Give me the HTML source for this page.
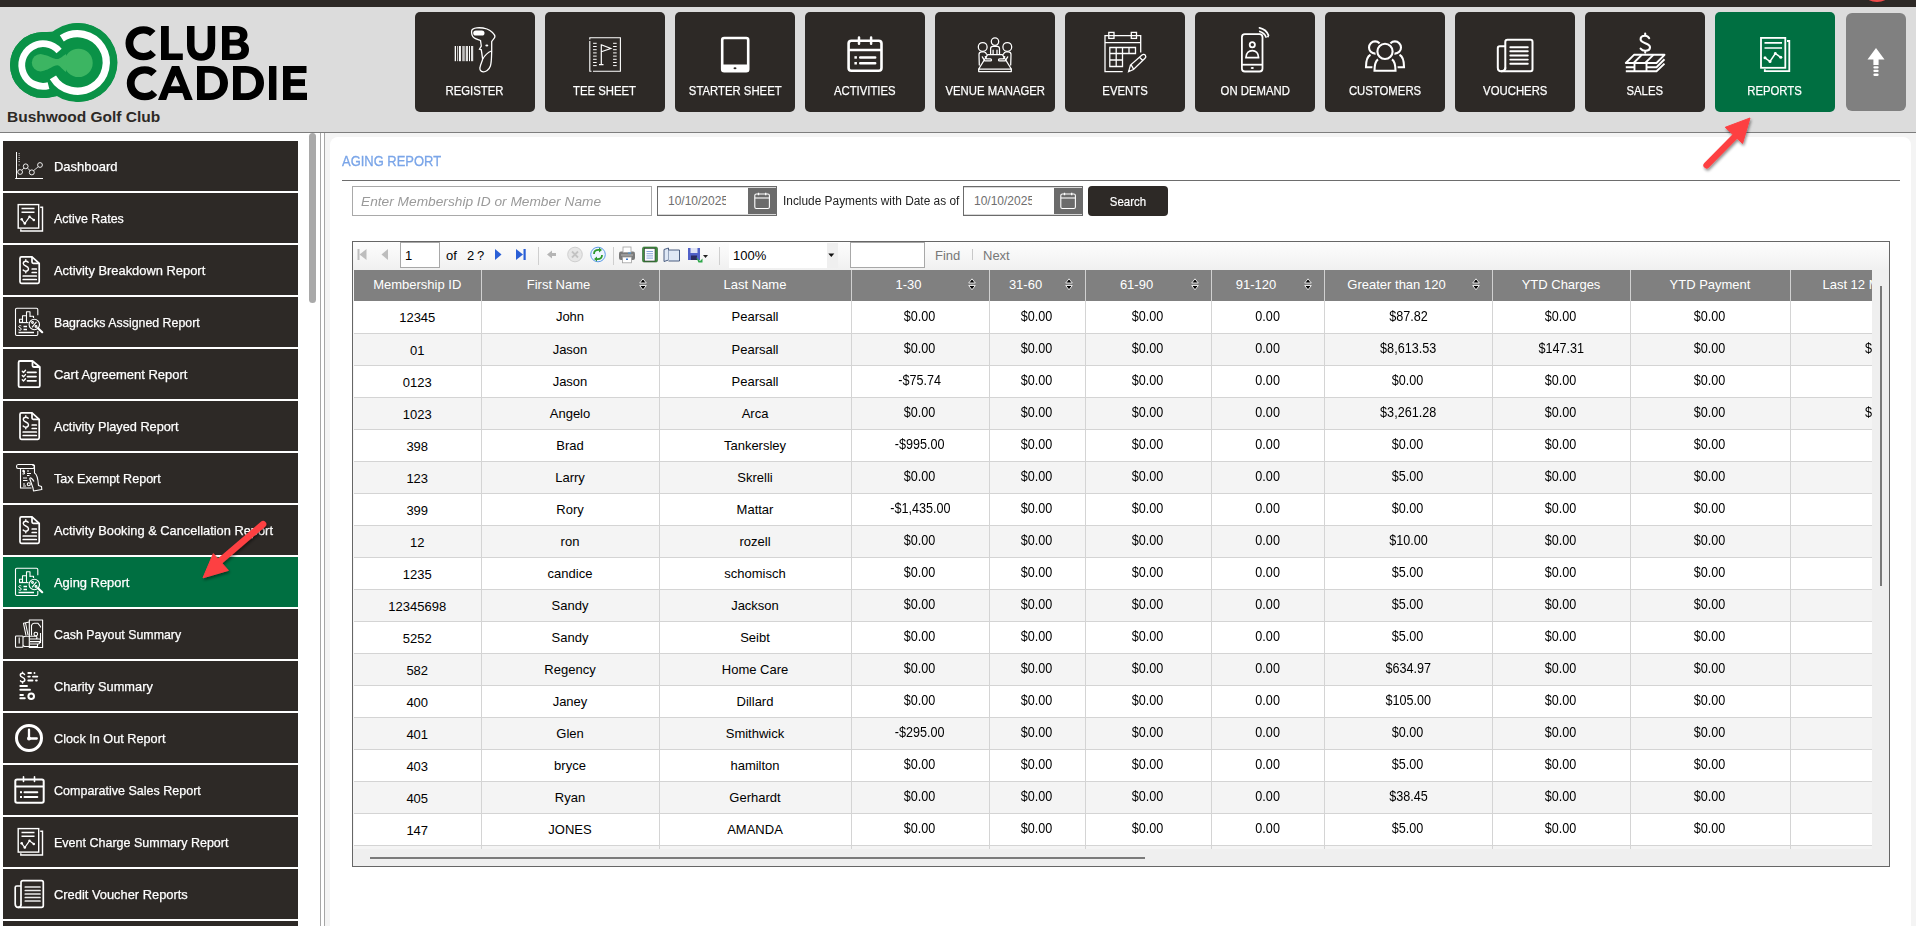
<!DOCTYPE html><html><head><meta charset="utf-8"><style>
*{margin:0;padding:0;box-sizing:border-box}
html,body{width:1916px;height:926px;overflow:hidden;background:#fff;font-family:"Liberation Sans",sans-serif}
.a{position:absolute}
.nb{position:absolute;top:12px;width:120px;height:100px;background:#2d2926;border-radius:5px;color:#fff}
.nb svg{position:absolute;left:30px;top:8px}
.nb span{position:absolute;left:0;width:120px;top:71px;text-align:center;font-size:13.5px;line-height:16px;white-space:nowrap;-webkit-text-stroke:0.25px #fff}
.nb span i{font-style:normal;display:inline-block;transform:scaleX(0.84);transform-origin:50% 50%}
.si{position:absolute;left:3px;width:295px;height:50px;background:#2d2926;color:#fff}
.si svg{position:absolute;left:5px;top:4px}
.si span{position:absolute;left:51px;top:18px;font-size:13px;line-height:16px;white-space:nowrap;-webkit-text-stroke:0.25px #fff}
table{border-collapse:collapse;table-layout:fixed}
#tb td{height:32px;border:1px solid #d4d4d4;border-top:none;text-align:center;font-size:13px;color:#000;white-space:nowrap;overflow:hidden;padding:2px 0 0 0;background:#fff}
#tb tr:nth-child(even) td{background:#f4f4f4}
#th td{height:31px;background:#808080;color:#fff;font-size:13px;text-align:center;border-left:1px solid #d0d0d0;position:relative;white-space:nowrap;overflow:hidden;padding:0 0 3px 0}
#th td.s{padding-right:23px}
#th td:first-child{border-left:none}
#tb td:first-child{border-left:none}
#tb td.m{font-size:14px;padding-top:0}
#tb td:nth-child(2),#tb td:nth-child(3){padding-top:0}
#tb td.m span{display:inline-block;transform:scaleX(0.9);position:relative;top:-1px}
.srt{position:absolute;top:8px}
</style></head><body>
<div class="a" style="left:0;top:0;width:1916px;height:7px;background:#2d2926"></div>
<div class="a" style="left:0;top:7px;width:1916px;height:125px;background:#dcdcdc"></div>
<div class="a" style="left:0;top:132px;width:1916px;height:1px;background:#7d7d7d"></div>
<div class="a" style="left:1866px;top:-10px;width:22px;height:12px;border-radius:50%;background:#f04a4a"></div>
<svg class="a" style="left:0;top:15px" width="320" height="100" viewBox="0 15 320 100">
<path fill="#0a9247" d="M43,32 A33,33 0 1,0 43,98 C52,98 60,96 66,91 C70,97 73,102 78,102 A39.5,39.5 0 0,0 78,23 C70,23 64,26 59,30 C54,32 48,32 43,32 Z"/>
<circle cx="43" cy="65" r="33" fill="#0a9247"/>
<circle cx="77.5" cy="62.5" r="39.5" fill="#0a9247"/>
<path d="M59.1,51.0 A21.3,21.3 0 1,0 48.5,85.6" fill="none" stroke="#fff" stroke-width="6.8"/>
<path d="M61.8,38.4 A28.75,28.75 0 1,1 52.9,77.3" fill="none" stroke="#fff" stroke-width="7.3"/>
<circle cx="40.5" cy="62.7" r="8.7" fill="#3cb562"/>
<circle cx="78.5" cy="62.9" r="14.2" fill="#3cb562"/>
<path d="M44,55 C49,55.5 53,59 57.4,59.1 C60,59 62,56.5 66,54 L66,72 C62,69.5 60,65.3 57.4,65.3 C53,65.3 49,70 44,70.5 Z" fill="#3cb562"/>
<g fill="#000">
<!-- C -->
<path d="M155.5,31 C152.5,27.8 148.5,26.2 143.5,26.2 C133,26.2 125.5,33.5 125.5,43.2 C125.5,53 133,60.3 143.5,60.3 C148.8,60.3 153,58.3 156,55 L150.5,50 C148.5,52.2 146.3,53 143.5,53 C137.8,53 133.3,48.8 133.3,43.2 C133.3,37.6 137.8,33.5 143.5,33.5 C146.2,33.5 148.2,34.3 150,36.2 Z"/>
<path d="M161,26 L168.8,26 L168.8,53.6 L182.8,53.6 L182.8,60 L161,60 Z"/>
<path d="M187,26 L194.5,26 L194.5,45.5 C194.5,50.5 197.3,53.3 201.2,53.3 C205,53.3 207.6,50.5 207.6,45.5 L207.6,26 L215.2,26 L215.2,45.5 C215.2,55 209.5,60.8 201.2,60.8 C192.8,60.8 187,55 187,45.5 Z"/>
<path d="M222,26 L236,26 C243.5,26 247.5,29.5 247.5,35 C247.5,38.2 246,40.5 243.5,41.7 C246.8,42.8 249,45.5 249,49.5 C249,56 244.5,60 236.5,60 L222,60 Z M229.6,32.3 L229.6,39.8 L235.3,39.8 C238.3,39.8 240,38.5 240,36 C240,33.6 238.3,32.3 235.3,32.3 Z M229.6,45.5 L229.6,53.7 L236,53.7 C239.5,53.7 241.3,52.2 241.3,49.6 C241.3,47 239.5,45.5 236,45.5 Z"/>
<!-- CADDIE -->
<path d="M156.8,71 C153.8,67.8 149.8,66.2 144.8,66.2 C134.3,66.2 126.8,73.5 126.8,83.2 C126.8,93 134.3,100.3 144.8,100.3 C150.1,100.3 154.3,98.3 157.3,95 L151.8,90 C149.8,92.2 147.6,93 144.8,93 C139.1,93 134.6,88.8 134.6,83.2 C134.6,77.6 139.1,73.5 144.8,73.5 C147.5,73.5 149.5,74.3 151.3,76.2 Z"/>
<path d="M171.9,66 L179.2,66 L192.8,100 L184.8,100 L182.4,93 L168.6,93 L166.2,100 L158,100 Z M175.5,75.5 L170.8,86.2 L180.2,86.2 Z"/>
<path d="M197,66 L209.5,66 C220.8,66 228,73 228,83 C228,93 220.8,100 209.5,100 L197,100 Z M204.8,72.8 L204.8,93.2 L209.5,93.2 C216,93.2 220,89.2 220,83 C220,76.8 216,72.8 209.5,72.8 Z"/>
<path d="M233,66 L245.5,66 C256.8,66 264,73 264,83 C264,93 256.8,100 245.5,100 L233,100 Z M240.8,72.8 L240.8,93.2 L245.5,93.2 C252,93.2 256,89.2 256,83 C256,76.8 252,72.8 245.5,72.8 Z"/>
<rect x="269" y="66" width="7.4" height="34"/>
<path d="M283,66 L306.5,66 L306.5,73 L290.6,73 L290.6,79.2 L305,79.2 L305,86 L290.6,86 L290.6,92.8 L307,92.8 L307,100 L283,100 Z"/>
</g>
</svg>
<div class="a" style="left:7px;top:108px;font-size:15.5px;line-height:18px;font-weight:bold;color:#2d2926;white-space:nowrap">Bushwood Golf Club</div>
<div class="nb" style="left:415px;background:#2d2926"><svg width="60" height="60" viewBox="0 0 60 60">
<g fill="#fff">
<rect x="9.7" y="26" width="1.3" height="15.2"/>
<rect x="12" y="26" width="0.7" height="15.2"/>
<rect x="13.9" y="26" width="2" height="15.2"/>
<rect x="17.2" y="26" width="2.6" height="15.2" opacity="0.7"/>
<rect x="20.7" y="26" width="2.3" height="15.2" opacity="0.85"/>
<rect x="24" y="26" width="1" height="15.2"/>
<rect x="26" y="26" width="2.2" height="15.2" opacity="0.85"/>
</g>
<path d="M26.6,11 C27,7.5 35,6.8 42,9 C46,10.5 50,14 49.9,16.8 C49.5,18.5 47.5,20 46.7,21.6 L46.7,31 C46.5,38 46.5,43 45.4,46 C44,50 40.5,52 38.2,51.8 C35.5,51.5 34.5,49.5 35,47.5 C35.5,44 37.6,41 37.6,38.9 L36.3,29.8 L34.5,29.2 L36.3,26 L35.5,20.5 C33,19.5 30.5,19 29,17.8 C27.2,16.5 26.4,14 26.6,11 Z" fill="none" stroke="#fff" stroke-width="1.3"/>
<rect x="28.2" y="10.4" width="11.3" height="5.2" rx="2.6" fill="#fff"/>
<ellipse cx="41.8" cy="25.6" rx="1.5" ry="1" fill="#fff"/>
<path d="M37.8,39 C40,35 43,32.3 46.3,31" fill="none" stroke="#fff" stroke-width="1.2"/>
</svg><span><i>REGISTER</i></span></div>
<div class="nb" style="left:545px;background:#2d2926"><svg width="60" height="60" viewBox="0 0 60 60">
<path d="M14.8,21 L14.8,51.3 L16.5,51.3 M18,51.3 L45.4,51.3 L45.4,17.7 L14.8,17.7 L14.8,19.5" fill="none" stroke="#fff" stroke-width="1.1"/>
<g stroke="#fff" stroke-width="1" stroke-linecap="round">
<path d="M18.5,23.3h2.8M18.5,26.5h2.8M18.5,29.7h2.8M18.5,32.9h2.8M18.5,36.1h2.8M18.5,39.3h2.8M18.5,42.5h2.8M18.5,45.6h2.8"/>
<path d="M38.5,23.3h2.8M38.5,26.5h2.8M38.5,29.7h2.8M38.5,32.9h2.8M38.5,36.1h2.8M38.5,39.3h2.8M38.5,42.5h2.8M38.5,45.6h2.8"/>
</g>
<path d="M26.3,24.3 L26.3,44.6 M24,44.6 L28.5,44.6 M26.3,24.8 L35.8,28.5 L26.3,31.8" fill="none" stroke="#fff" stroke-width="1.2"/>
</svg><span><i>TEE SHEET</i></span></div>
<div class="nb" style="left:675px;background:#2d2926"><svg width="60" height="60" viewBox="0 0 60 60">
<rect x="17.2" y="18" width="26" height="33.2" rx="2" fill="none" stroke="#fff" stroke-width="2.6"/>
<rect x="17" y="44.5" width="26.5" height="7" fill="#fff"/>
<ellipse cx="30" cy="48.3" rx="1.5" ry="1" fill="#2d2926"/>
</svg><span><i>STARTER SHEET</i></span></div>
<div class="nb" style="left:805px;background:#2d2926"><svg width="60" height="60" viewBox="0 0 60 60">
<rect x="13.6" y="20.8" width="32.9" height="29.9" rx="2.8" fill="none" stroke="#fff" stroke-width="2.6"/>
<path d="M13.6,30 L46.5,30" stroke="#fff" stroke-width="2.6"/>
<path d="M24,17.5 L24,23.8 M36.1,17.5 L36.1,23.8" stroke="#fff" stroke-width="2.5" stroke-linecap="round"/>
<rect x="19.4" y="36.2" width="2.5" height="2.5" fill="#fff"/>
<rect x="19.4" y="42" width="2.5" height="2.5" fill="#fff"/>
<path d="M25.2,37.5 L40.2,37.5 M25.2,43.2 L40.2,43.2" stroke="#fff" stroke-width="2.5" stroke-linecap="round"/>
</svg><span><i>ACTIVITIES</i></span></div>
<div class="nb" style="left:935px;background:#2d2926"><svg width="60" height="60" viewBox="0 0 60 60">
<g fill="none" stroke="#fff" stroke-width="1.25" stroke-linejoin="round" stroke-linecap="round">
<circle cx="30" cy="21.6" r="3.7"/>
<circle cx="17.7" cy="26.9" r="4.4"/>
<circle cx="42.3" cy="26.9" r="4.4"/>
<path d="M25.6,34.2 L25.6,28.6 Q25.6,26.3 27.9,26.3 L32.2,26.3 Q34.5,26.3 34.5,28.6 L34.5,34.2"/>
<path d="M28.1,30.2 L28.1,34.2 M32,30.2 L32,34.2"/>
<path d="M14.3,45 L14,34.6 Q14,31.9 16.8,31.9 L18.8,31.9 Q20.8,31.9 21.6,34.2"/>
<path d="M45.7,45 L46,34.6 Q46,31.9 43.2,31.9 L41.2,31.9 Q39.2,31.9 38.4,34.2"/>
<path d="M22.6,34.6 L37.4,34.6 L46.3,49 L13.7,49 Z"/>
<path d="M13.7,49 L13.7,51.6 L46.3,51.6 L46.3,49"/>
<path d="M17.3,36.8 L19.8,40.9 L25.4,40.9 Q26.5,40.9 26.5,39.9 Q26.5,38.9 25.4,38.9 L21.6,38.9 L20.3,36.6"/>
<path d="M42.7,36.8 L40.2,40.9 L34.6,40.9 Q33.5,40.9 33.5,39.9 Q33.5,38.9 34.6,38.9 L38.4,38.9 L39.7,36.6"/>
</g>
</svg><span><i>VENUE MANAGER</i></span></div>
<div class="nb" style="left:1065px;background:#2d2926"><svg width="60" height="60" viewBox="0 0 60 60">
<g fill="none" stroke="#fff" stroke-width="1.3">
<path d="M27.7,51.6 L10,51.6 L10,15.6 L45.7,15.6 L45.7,32.5"/>
<path d="M10,22.7 L45.7,22.7"/>
<rect x="13.8" y="12.4" width="5.2" height="6"/>
<rect x="36.3" y="12.4" width="5.2" height="6"/>
<path d="M14.8,27.5 L40.5,27.5 L40.5,33.5 L14.8,33.5 Z M14.8,33.5 L14.8,46.5 L27.5,46.5 L27.5,27.5 M21.2,27.5 L21.2,46.5 M14.8,40 L27.5,40 M34,27.5 L34,33.5"/>
<path d="M33.6,51.6 L35.5,45 L47,35 C48.2,34 49.5,34.2 50.3,35.2 C51,36.2 51,37.3 50,38.3 L38.5,49.5 Z M36,44.7 L38.6,49.2 M44.5,37 L47.5,40.5"/>
</g>
</svg><span><i>EVENTS</i></span></div>
<div class="nb" style="left:1195px;background:#2d2926"><svg width="60" height="60" viewBox="0 0 60 60">
<g fill="none" stroke="#fff" stroke-width="1.8">
<rect x="16.9" y="14.2" width="20.6" height="37.3" rx="3"/>
<path d="M16.9,44.7 L37.5,44.7"/>
<circle cx="27.3" cy="24.7" r="2.6"/>
<path d="M21,37.6 C21,33 24,30.6 27.3,30.6 C30.5,30.6 33.5,33 33.5,37.6 Z"/>
<path d="M34.8,11.5 C38,12.5 40,14.5 41,17" stroke-linecap="round"/>
<path d="M34.5,7.8 C39.5,9 42.5,12.5 43.5,15.2" stroke-linecap="round"/>
</g>
<circle cx="43" cy="16.6" r="1" fill="#fff"/>
<ellipse cx="27.3" cy="48" rx="1.6" ry="0.9" fill="#fff"/>
</svg><span><i>ON DEMAND</i></span></div>
<div class="nb" style="left:1325px;background:#2d2926"><svg width="60" height="60" viewBox="0 0 60 60">
<g fill="none" stroke="#fff" stroke-width="2.1">
<circle cx="20.1" cy="27.5" r="6.1"/>
<circle cx="39.9" cy="27.5" r="6.1"/>
<path d="M15.5,34.8 C12,36.5 11,40 11,47.2 L20,47.2 M44.5,34.8 C48,36.5 49,40 49,47.2 L40,47.2"/>
<circle cx="30" cy="31.4" r="7.6" fill="#2d2926" stroke="#2d2926" stroke-width="4.5"/>
<path d="M22.5,39.2 C19.8,41 19.2,44.5 19.2,50.8 L40.8,50.8 C40.8,44.5 40.2,41 37.5,39.2" fill="#2d2926" stroke="#2d2926" stroke-width="4"/>
<circle cx="30" cy="31.4" r="7.6"/>
<path d="M23,39.3 C20.2,41.2 19.5,44.5 19.5,50.8 L40.5,50.8 C40.5,44.5 39.8,41.2 37,39.3"/>
</g>
</svg><span><i>CUSTOMERS</i></span></div>
<div class="nb" style="left:1455px;background:#2d2926"><svg width="60" height="60" viewBox="0 0 60 60">
<g fill="none" stroke="#fff" stroke-width="2">
<path d="M20.3,49.5 L20.3,22 C20.3,20.5 21,19.8 22.5,19.8 L45.5,19.8 C47,19.8 47.5,20.5 47.5,22 L47.5,49 C47.5,50.5 47,51.2 45.5,51.2 L16,51.2 C14,51.2 12.8,50 12.8,47.5 L12.8,28 C12.8,26.8 13.5,26.2 14.8,26.2 L20.3,26.2"/>
<path d="M16,51.2 C18.5,51.2 20.3,50 20.3,47.5"/>
</g>
<path d="M25.3,27.2 L42.8,27.2 M25.3,31.3 L42.8,31.3 M25.3,35.5 L42.8,35.5 M25.3,39.6 L42.8,39.6 M25.3,43.8 L42.8,43.8" stroke="#fff" stroke-width="1.9" stroke-linecap="round"/>
</svg><span><i>VOUCHERS</i></span></div>
<div class="nb" style="left:1585px;background:#2d2926"><svg width="60" height="60" viewBox="0 0 60 60">
<path d="M34.2,18.2 C33.2,16.5 31.7,15.8 30,15.8 C27.3,15.8 25.6,17.2 25.6,19.3 C25.6,23.8 35,22.6 35,27.2 C35,29.4 33,30.7 30.2,30.7 C28.3,30.7 26.6,29.9 25.6,28.6 M30.2,13.6 L30.2,15.8 M30.2,30.7 L30.2,32.6" fill="none" stroke="#fff" stroke-width="2.1" stroke-linecap="round"/>
<g fill="none" stroke="#fff" stroke-width="1.9" stroke-linejoin="round">
<path d="M10.8,43 L19,34.8 L49.5,34.8 L41.5,43 Z"/>
<path d="M18.6,43 L26.8,34.8 M30.2,43 L38.4,34.8"/>
<path d="M10.8,47.2 L19.5,47.2 M31.5,47.2 L41.5,47.2 L49.5,39.3 M10.8,51.3 L41.5,51.3 L49.5,43.6"/>
<path d="M19.5,43 L19.5,51.3 M31.5,43 L31.5,51.3"/>
</g>
</svg><span><i>SALES</i></span></div>
<div class="nb" style="left:1715px;background:#006f41"><svg width="60" height="60" viewBox="0 0 60 60">
<g fill="none" stroke="#fff" stroke-width="1.8">
<rect x="16" y="17.9" width="24.3" height="29.9"/>
<path d="M42,21 L44.3,21 L44.3,51.2 L19.8,51.2 L19.8,49.2"/>
<path d="M19.5,22.8 L37,22.8 M19.5,28 L37,28" stroke-width="1.7"/>
<path d="M20,37.8 L25,41.5 L30.3,33.5 L35.8,37.3" stroke-width="1.5"/>
</g>
<g fill="#fff"><circle cx="20" cy="37.8" r="1.5"/><circle cx="25" cy="41.5" r="1.5"/><circle cx="30.3" cy="33.5" r="1.4"/><circle cx="35.8" cy="37.3" r="1.5"/></g>
</svg><span><i>REPORTS</i></span></div>
<div class="a" style="left:1846px;top:13px;width:60px;height:98px;background:#808080;border-radius:6px"><svg class="a" style="left:0;top:0" width="60" height="98" viewBox="0 0 60 98">
<path d="M30,35 L38.5,46.6 L32.6,46.6 L32.6,52 L27.4,52 L27.4,46.6 L21.5,46.6 Z" fill="#fff"/>
<rect x="27.4" y="53.2" width="5.2" height="2.3" rx="1" fill="#fff"/>
<rect x="27.4" y="56.8" width="5.2" height="2.3" rx="1" fill="#fff"/>
<rect x="27.4" y="60.4" width="5.2" height="2.5" rx="1.2" fill="#fff"/>
</svg></div>
<div class="a" style="left:309px;top:133px;width:7px;height:170px;background:#a9a9a9;border-radius:4px"></div>
<div class="a" style="left:320px;top:133px;width:1px;height:793px;background:#a6a6a6"></div>
<div class="a" style="left:324px;top:133px;width:1px;height:793px;background:#a6a6a6"></div>
<div class="si" style="top:141px;background:#2d2926"><svg width="40" height="40" viewBox="0 0 40 40">
<g fill="none" stroke="#fff">
<path d="M8.5,7 L8.5,34 M7.2,33.5 L35,33.5" stroke-width="1"/>
<circle cx="12.1" cy="27" r="2.4" stroke-width="0.9"/>
<circle cx="17.7" cy="21.3" r="2.4" stroke-width="0.9"/>
<circle cx="23.8" cy="27.4" r="2.5" stroke-width="0.9"/>
<circle cx="32" cy="20" r="2.4" stroke-width="0.9"/>
<path d="M13.8,25.3 L16,23 M19.4,23 L22,25.6 M25.6,25.6 L30.3,21.7" stroke-width="0.8"/>
<path d="M10.5,8.5h1.3M10.5,10.3h1.3M10.5,12.5h1.3M10.5,14.5h1.3M10.5,16.5h1.3M10.5,20h1.3" stroke-width="0.8" opacity="0.8"/>
</g></svg><span style="transform:scaleX(0.998);transform-origin:0 50%">Dashboard</span></div>
<div class="si" style="top:193px;background:#2d2926"><svg width="40" height="40" viewBox="0 0 40 40">
<g fill="none" stroke="#fff" stroke-width="1.4">
<rect x="10.2" y="7.6" width="20.5" height="23.5"/>
<path d="M32.2,10.3 L34.5,10.3 L34.5,34 L12.8,34 L12.8,32.2"/>
<path d="M13.5,11.5 L26.5,11.5 M13.5,15.3 L26.5,15.3" stroke-width="1.5"/>
<path d="M13.7,22.3 L16.8,26.5 L21.5,19.8 L25.8,23" stroke-width="1.2"/>
</g>
<g fill="#fff"><circle cx="13.7" cy="22.3" r="1.3"/><circle cx="16.8" cy="26.5" r="1.3"/><circle cx="21.5" cy="19.8" r="1.2"/><circle cx="25.8" cy="23" r="1.3"/></g></svg><span style="transform:scaleX(0.956);transform-origin:0 50%">Active Rates</span></div>
<div class="si" style="top:245px;background:#2d2926"><svg width="40" height="40" viewBox="0 0 40 40">
<g fill="none" stroke="#fff" stroke-width="1.7" stroke-linejoin="round">
<path d="M24,7.8 L13.5,7.8 C12.5,7.8 12,8.3 12,9.3 L12,32.8 C12,33.8 12.5,34.3 13.5,34.3 L29.8,34.3 C30.8,34.3 31.2,33.8 31.2,32.8 L31.2,14.3 Z"/>
<path d="M24,7.8 L24,13 C24,13.8 24.5,14.3 25.3,14.3 L31.2,14.3"/>
<path d="M24.2,20 L28.3,20 M24.2,23.5 L28.3,23.5 M15.2,27 L28.3,27 M15.2,30.5 L28.3,30.5" stroke-linecap="round"/>
<path d="M20.2,13.3 C19.5,12.5 18.8,12.3 17.8,12.3 C16.3,12.3 15.3,13.2 15.3,14.6 C15.3,17.5 20.5,16.5 20.5,19.8 C20.5,21.2 19.3,22.2 17.8,22.2 C16.8,22.2 15.8,21.8 15.2,21 M17.8,10.8 L17.8,12.3 M17.8,22.2 L17.8,23.8" stroke-width="1.4" stroke-linecap="round"/>
</g></svg><span style="transform:scaleX(0.992);transform-origin:0 50%">Activity Breakdown Report</span></div>
<div class="si" style="top:297px;background:#2d2926"><svg width="40" height="40" viewBox="0 0 40 40">
<g fill="none" stroke="#fff" stroke-width="1.1" stroke-linejoin="round">
<path d="M29.8,14.2 L29.8,8.5 C29.8,7.7 29.3,7.2 28.5,7.2 L8.8,7.2 C8,7.2 7.5,7.7 7.5,8.5 L7.5,33.3 C7.5,34.1 8,34.5 8.8,34.5 L28.5,34.5 C29.3,34.5 29.8,34.1 29.8,33.3 L29.8,30"/>
<path d="M11.5,21.3 L11.5,18.3 L14.5,18.3 L14.5,21.3 Z M14.5,21.3 L14.5,14.8 L18.5,14.8 L18.5,21.3 M18.5,16.5 L18.5,10.8 L22,10.8 L22,16 M22.5,15.3 L25.5,15.3 L25.5,17"/>
<path d="M11.2,21.6 L20.5,21.6"/>
<circle cx="26.3" cy="23.5" r="5.2"/>
<path d="M30,27.2 L34.2,31.2" stroke-width="2.2" stroke-linecap="round"/>
<path d="M24,26.3 L28.5,20.8"/>
<circle cx="24.5" cy="21.5" r="0.9"/><circle cx="28" cy="25.5" r="0.9"/>
<path d="M15.5,25.5 L19,25.5 M15.5,28.5 L19,28.5 M10.5,31.5 L26,31.5" stroke-width="1.3"/>
<path d="M13.3,25 C12.8,24.5 11,24.3 10.8,25.5 C10.6,27 13.3,26.5 13.3,28.2 C13.3,29.3 11.5,29.5 10.5,28.7" stroke-width="1"/>
</g></svg><span style="transform:scaleX(0.951);transform-origin:0 50%">Bagracks Assigned Report</span></div>
<div class="si" style="top:349px;background:#2d2926"><svg width="40" height="40" viewBox="0 0 40 40">
<g fill="none" stroke="#fff" stroke-width="1.8" stroke-linejoin="round">
<path d="M24.5,8 L12,8 C11,8 10.6,8.5 10.6,9.5 L10.6,32.8 C10.6,33.8 11,34.2 12,34.2 L30.5,34.2 C31.5,34.2 31.8,33.8 31.8,32.8 L31.8,14 Z"/>
<path d="M24.5,8 L24.5,12.8 C24.5,13.6 25,14 25.8,14 L31.8,14"/>
<path d="M19.5,19.3 L28,19.3 M19.5,23.6 L28,23.6 M19.5,27.8 L28,27.8" stroke-linecap="round"/>
<path d="M14.3,18.3 L15.5,19.5 L17.5,17.3 M14.3,22.6 L15.5,23.8 L17.5,21.6 M14.3,26.8 L15.5,28 L17.5,25.8" stroke-width="1.4" stroke-linecap="round"/>
</g></svg><span style="transform:scaleX(0.998);transform-origin:0 50%">Cart Agreement Report</span></div>
<div class="si" style="top:401px;background:#2d2926"><svg width="40" height="40" viewBox="0 0 40 40">
<g fill="none" stroke="#fff" stroke-width="1.7" stroke-linejoin="round">
<path d="M24,7.8 L13.5,7.8 C12.5,7.8 12,8.3 12,9.3 L12,32.8 C12,33.8 12.5,34.3 13.5,34.3 L29.8,34.3 C30.8,34.3 31.2,33.8 31.2,32.8 L31.2,14.3 Z"/>
<path d="M24,7.8 L24,13 C24,13.8 24.5,14.3 25.3,14.3 L31.2,14.3"/>
<path d="M24.2,20 L28.3,20 M24.2,23.5 L28.3,23.5 M15.2,27 L28.3,27 M15.2,30.5 L28.3,30.5" stroke-linecap="round"/>
<path d="M20.2,13.3 C19.5,12.5 18.8,12.3 17.8,12.3 C16.3,12.3 15.3,13.2 15.3,14.6 C15.3,17.5 20.5,16.5 20.5,19.8 C20.5,21.2 19.3,22.2 17.8,22.2 C16.8,22.2 15.8,21.8 15.2,21 M17.8,10.8 L17.8,12.3 M17.8,22.2 L17.8,23.8" stroke-width="1.4" stroke-linecap="round"/>
</g></svg><span style="transform:scaleX(0.98);transform-origin:0 50%">Activity Played Report</span></div>
<div class="si" style="top:453px;background:#2d2926"><svg width="40" height="40" viewBox="0 0 40 40">
<g fill="none" stroke="#fff" stroke-width="1.1" stroke-linejoin="round">
<path d="M10,11.5 C9,11.5 8.5,10.5 8.5,9.5 C8.5,8.5 9.2,7.5 10.2,7.5 L24.5,7.5 C26,7.5 26.8,8.5 26.5,10 C26.2,11 25.5,11.5 24.8,11.5 Z"/>
<path d="M12.5,11.5 L12.5,31 L23.5,31 M24,7.8 C25.5,8 26.5,9 26.5,10.5 L26.5,16 C28.5,17 30,21 30.5,28.5 L33.5,29.5 L33.8,32.5 L25.5,34 L25,31 L22,22.5 C21.5,21.5 22,20.5 23,21 C24.5,22 25.5,23.5 26,24.5"/>
<path d="M15,14.5h2 M19,14h2 M19,16.5h4 M19,18.5h2.5 M15,21h4 M15,23.5h4.5 M15,27h2 M15,29h3" stroke-width="1.2"/>
<circle cx="20.8" cy="27.3" r="1.5"/>
<path d="M16.5,13.8 C16,13.2 15,13.2 14.8,14 C14.6,15 16.5,15 16.5,16.2 C16.5,17 15.2,17.2 14.6,16.6"/>
</g></svg><span style="transform:scaleX(0.966);transform-origin:0 50%">Tax Exempt Report</span></div>
<div class="si" style="top:505px;background:#2d2926"><svg width="40" height="40" viewBox="0 0 40 40">
<g fill="none" stroke="#fff" stroke-width="1.7" stroke-linejoin="round">
<path d="M24,7.8 L13.5,7.8 C12.5,7.8 12,8.3 12,9.3 L12,32.8 C12,33.8 12.5,34.3 13.5,34.3 L29.8,34.3 C30.8,34.3 31.2,33.8 31.2,32.8 L31.2,14.3 Z"/>
<path d="M24,7.8 L24,13 C24,13.8 24.5,14.3 25.3,14.3 L31.2,14.3"/>
<path d="M24.2,20 L28.3,20 M24.2,23.5 L28.3,23.5 M15.2,27 L28.3,27 M15.2,30.5 L28.3,30.5" stroke-linecap="round"/>
<path d="M20.2,13.3 C19.5,12.5 18.8,12.3 17.8,12.3 C16.3,12.3 15.3,13.2 15.3,14.6 C15.3,17.5 20.5,16.5 20.5,19.8 C20.5,21.2 19.3,22.2 17.8,22.2 C16.8,22.2 15.8,21.8 15.2,21 M17.8,10.8 L17.8,12.3 M17.8,22.2 L17.8,23.8" stroke-width="1.4" stroke-linecap="round"/>
</g></svg><span style="transform:scaleX(0.987);transform-origin:0 50%">Activity Booking &amp; Cancellation Report</span></div>
<div class="si" style="top:557px;background:#006f41"><svg width="40" height="40" viewBox="0 0 40 40">
<g fill="none" stroke="#fff" stroke-width="1.1" stroke-linejoin="round">
<path d="M29.8,14.2 L29.8,8.5 C29.8,7.7 29.3,7.2 28.5,7.2 L8.8,7.2 C8,7.2 7.5,7.7 7.5,8.5 L7.5,33.3 C7.5,34.1 8,34.5 8.8,34.5 L28.5,34.5 C29.3,34.5 29.8,34.1 29.8,33.3 L29.8,30"/>
<path d="M11.5,21.3 L11.5,18.3 L14.5,18.3 L14.5,21.3 Z M14.5,21.3 L14.5,14.8 L18.5,14.8 L18.5,21.3 M18.5,16.5 L18.5,10.8 L22,10.8 L22,16 M22.5,15.3 L25.5,15.3 L25.5,17"/>
<path d="M11.2,21.6 L20.5,21.6"/>
<circle cx="26.3" cy="23.5" r="5.2"/>
<path d="M30,27.2 L34.2,31.2" stroke-width="2.2" stroke-linecap="round"/>
<path d="M24,26.3 L28.5,20.8"/>
<circle cx="24.5" cy="21.5" r="0.9"/><circle cx="28" cy="25.5" r="0.9"/>
<path d="M15.5,25.5 L19,25.5 M15.5,28.5 L19,28.5 M10.5,31.5 L26,31.5" stroke-width="1.3"/>
<path d="M13.3,25 C12.8,24.5 11,24.3 10.8,25.5 C10.6,27 13.3,26.5 13.3,28.2 C13.3,29.3 11.5,29.5 10.5,28.7" stroke-width="1"/>
</g></svg><span style="transform:scaleX(0.993);transform-origin:0 50%">Aging Report</span></div>
<div class="si" style="top:609px;background:#2d2926"><svg width="40" height="40" viewBox="0 0 40 40">
<g fill="none" stroke="#fff" stroke-width="1.1" stroke-linejoin="round">
<rect x="21.3" y="7" width="13.3" height="27.5"/>
<path d="M21.3,9 L15.5,10.3 L18,22.5 M17.5,10 L20,22"/>
<path d="M23.5,22.5 L23.5,12.5 C24,11 25,10.3 26,10.3 L30,10.3 L32.5,13.5 L32.5,14.5"/>
<circle cx="27.8" cy="21" r="1.8"/>
<path d="M32.5,20 L32.5,30"/>
<rect x="7.5" y="23" width="7.5" height="11.3" rx="0.8"/>
<path d="M11.2,24.5 L11.2,30.5"/>
<path d="M15,24 L17.5,23.3 L27.5,23.3 C28.5,23.3 29,24 29,24.8 C29,25.5 28.5,26 27.5,26 L22,26 M22,26 L31.5,26 C32.3,26 32.7,26.7 32.7,27.3 C32.7,28 32.3,28.6 31.5,28.6 L22,28.6 M22,28.6 L30.5,28.6 C31.2,28.6 31.5,29.2 31.5,29.8 C31.5,30.5 31,31 30.5,31 L22,31 M22,31 L29.5,31 L29.5,33.5 L16.5,33.5 L15,32.5"/>
</g></svg><span style="transform:scaleX(0.951);transform-origin:0 50%">Cash Payout Summary</span></div>
<div class="si" style="top:661px;background:#2d2926"><svg width="40" height="40" viewBox="0 0 40 40">
<g fill="none" stroke="#fff" stroke-width="1.9" stroke-linecap="round">
<path d="M16.5,9.5 C16,8.5 15.2,8.3 14.5,8.3 C13.2,8.3 12.3,9.2 12.3,10.3 C12.3,12.8 16.8,12 16.8,14.8 C16.8,16 15.8,16.8 14.5,16.8 C13.5,16.8 12.8,16.3 12.5,15.8 M14.6,7.2 L14.6,8.3 M14.6,16.8 L14.6,18" stroke-width="1.5"/>
<path d="M20.3,8 L23,8 M26.5,8 L26.5,8 M20.3,11.6 L21.8,11.6 M25,11.6 L29.3,11.6 M20.3,15.5 L24.5,15.5 M28,15.5 L28.8,15.5"/>
<path d="M12.3,21 L19,21 M12.3,24.8 L22,24.8 M12.3,30 L15,30 M12.3,33.3 L16.8,33.3"/>
<circle cx="23.2" cy="31.3" r="2.8" stroke-width="2"/>
</g></svg><span style="transform:scaleX(0.984);transform-origin:0 50%">Charity Summary</span></div>
<div class="si" style="top:713px;background:#2d2926"><svg width="40" height="40" viewBox="0 0 40 40">
<circle cx="21" cy="21" r="12.5" fill="none" stroke="#fff" stroke-width="3"/>
<path d="M21,12.7 L21,21.5 L28.8,21.5" fill="none" stroke="#fff" stroke-width="2.3" stroke-linecap="round"/>
<circle cx="21" cy="21.5" r="2" fill="#fff"/></svg><span style="transform:scaleX(0.976);transform-origin:0 50%">Clock In Out Report</span></div>
<div class="si" style="top:765px;background:#2d2926"><svg width="40" height="40" viewBox="0 0 40 40">
<rect x="7.3" y="10.5" width="28.4" height="23.3" rx="1.8" fill="none" stroke="#fff" stroke-width="2"/>
<path d="M7.3,17.5 L35.7,17.5" stroke="#fff" stroke-width="2"/>
<path d="M15.5,7.8 L15.5,12.5 M26.5,7.8 L26.5,12.5" stroke="#fff" stroke-width="1.6" stroke-linecap="round"/>
<rect x="12" y="22.2" width="2" height="2" fill="#fff"/><rect x="12" y="27" width="2" height="2" fill="#fff"/>
<path d="M16.5,23.3 L29.3,23.3 M16.5,28 L29.3,28" stroke="#fff" stroke-width="2" stroke-linecap="round"/></svg><span style="transform:scaleX(0.963);transform-origin:0 50%">Comparative Sales Report</span></div>
<div class="si" style="top:817px;background:#2d2926"><svg width="40" height="40" viewBox="0 0 40 40">
<g fill="none" stroke="#fff" stroke-width="1.4">
<rect x="10.2" y="7.6" width="20.5" height="23.5"/>
<path d="M32.2,10.3 L34.5,10.3 L34.5,34 L12.8,34 L12.8,32.2"/>
<path d="M13.5,11.5 L26.5,11.5 M13.5,15.3 L26.5,15.3" stroke-width="1.5"/>
<path d="M13.7,22.3 L16.8,26.5 L21.5,19.8 L25.8,23" stroke-width="1.2"/>
</g>
<g fill="#fff"><circle cx="13.7" cy="22.3" r="1.3"/><circle cx="16.8" cy="26.5" r="1.3"/><circle cx="21.5" cy="19.8" r="1.2"/><circle cx="25.8" cy="23" r="1.3"/></g></svg><span style="transform:scaleX(0.962);transform-origin:0 50%">Event Charge Summary Report</span></div>
<div class="si" style="top:869px;background:#2d2926"><svg width="40" height="40" viewBox="0 0 40 40">
<g fill="none" stroke="#fff" stroke-width="1.7">
<path d="M13,32.5 L13,9.5 C13,8.3 13.8,7.7 15,7.7 L33.5,7.7 C34.7,7.7 35.3,8.3 35.3,9.5 L35.3,32.5 C35.3,33.7 34.7,34.3 33.5,34.3 L10,34.3 C8.3,34.3 7.2,33 7.2,31 L7.2,14.5 C7.2,13.6 7.8,13 8.7,13 L13,13"/>
<path d="M10,34.3 C12,34.3 13,33.2 13,31.5"/>
</g>
<path d="M17.3,14 L32,14 M17.3,17.5 L32,17.5 M17.3,21 L32,21 M17.3,24.5 L32,24.5 M17.3,28 L32,28" stroke="#fff" stroke-width="1.7" stroke-linecap="round" opacity="0.9"/></svg><span style="transform:scaleX(0.99);transform-origin:0 50%">Credit Voucher Reports</span></div>
<div class="si" style="top:921px;background:#2d2926"><svg width="40" height="40" viewBox="0 0 40 40"></svg><span style="transform:scaleX(1);transform-origin:0 50%"></span></div>
<div class="a" style="left:325px;top:133px;width:1591px;height:793px;background:#f4f4f4"></div>
<div class="a" style="left:330px;top:137px;width:1581px;height:800px;background:#fff;border-radius:8px"></div>
<div class="a" style="left:342px;top:153px;font-size:14px;line-height:16px;color:#7aa5e8;white-space:nowrap;transform:scaleX(0.925);transform-origin:0 0;-webkit-text-stroke:0.3px #7aa5e8">AGING REPORT</div>
<div class="a" style="left:342px;top:180px;width:1558px;height:1px;background:#6d6d6d"></div>
<div class="a" style="left:352px;top:186px;width:300px;height:30px;border:1px solid #a9a9a9;background:#fff"></div>
<div class="a" style="left:361px;top:194px;font-size:13px;line-height:16px;color:#9a9a9a;font-style:italic;white-space:nowrap;transform:scaleX(1.055);transform-origin:0 0">Enter Membership ID or Member Name</div>
<div class="a" style="left:657px;top:186px;width:120px;height:30px;border:1px solid #6b6b6b;background:#fff"></div>
<div class="a" style="left:658px;top:187px;width:118px;height:1px;background:#d8d8d8"></div>
<div class="a" style="left:658px;top:214px;width:118px;height:1px;background:#d8d8d8"></div>
<div class="a" style="left:748px;top:188px;width:28px;height:26px;background:#6b6b6b"></div>
<svg class="a" style="left:748px;top:188px" width="28" height="26" viewBox="0 0 28 26"><rect x="6.8" y="6" width="14.6" height="14.5" rx="1.5" fill="none" stroke="#fff" stroke-width="1.1"/><path d="M6.8,10 L21.4,10" stroke="#fff" stroke-width="1.1"/><path d="M10.5,4.8 L10.5,7.3 M17.7,4.8 L17.7,7.3" stroke="#fff" stroke-width="1.3"/></svg>
<div class="a" style="left:668px;top:194px;width:58px;overflow:hidden;font-size:12px;line-height:14px;color:#6e6e6e;white-space:nowrap">10/10/2025</div>
<div class="a" style="left:783px;top:194px;font-size:12px;line-height:14px;color:#222;white-space:nowrap;transform:scaleX(0.99);transform-origin:0 0">Include Payments with Date as of</div>
<div class="a" style="left:963px;top:186px;width:120px;height:30px;border:1px solid #6b6b6b;background:#fff"></div>
<div class="a" style="left:964px;top:187px;width:118px;height:1px;background:#d8d8d8"></div>
<div class="a" style="left:964px;top:214px;width:118px;height:1px;background:#d8d8d8"></div>
<div class="a" style="left:1054px;top:188px;width:28px;height:26px;background:#6b6b6b"></div>
<svg class="a" style="left:1054px;top:188px" width="28" height="26" viewBox="0 0 28 26"><rect x="6.8" y="6" width="14.6" height="14.5" rx="1.5" fill="none" stroke="#fff" stroke-width="1.1"/><path d="M6.8,10 L21.4,10" stroke="#fff" stroke-width="1.1"/><path d="M10.5,4.8 L10.5,7.3 M17.7,4.8 L17.7,7.3" stroke="#fff" stroke-width="1.3"/></svg>
<div class="a" style="left:974px;top:194px;width:58px;overflow:hidden;font-size:12px;line-height:14px;color:#6e6e6e;white-space:nowrap">10/10/2025</div>
<div class="a" style="left:1088px;top:186px;width:80px;height:30px;background:#2d2926;border-radius:4px"></div><div class="a" style="left:1088px;top:187px;width:80px;color:#fff;font-size:13px;line-height:30px;text-align:center;transform:scaleX(0.88);-webkit-text-stroke:0.2px #fff">Search</div>
<div class="a" style="left:352px;top:241px;width:1538px;height:626px;border:1px solid #666;background:#efefef"></div>
<div class="a" style="left:353px;top:242px;width:1536px;height:28px;background:linear-gradient(#fdfdfd,#f0f0f0)"></div>
<svg class="a" style="left:353px;top:242px" width="700" height="28" viewBox="0 0 700 28">
<g fill="#bdbdbd"><rect x="4.5" y="7" width="2" height="11"/><path d="M6.5,12.5 L13.5,7 L13.5,18 Z"/><path d="M28.5,12.5 L35,7 L35,18 Z"/></g>
<g fill="#2a5fd6"><path d="M142,7 L148.5,12.5 L142,18 Z"/><path d="M163,7 L170,12.5 L163,18 Z"/><rect x="170.5" y="7" width="2.2" height="11"/></g>
<rect x="185" y="5" width="1" height="18" fill="#cfcfcf"/>
<path d="M194,12.5 L199,8.5 L199,11 L203,11 L203,14 L199,14 L199,16.5 Z" fill="#b5b5b5"/>
<circle cx="222" cy="12.5" r="7.3" fill="#e6e6e6" stroke="#cfcfcf" stroke-width="1"/>
<path d="M219,9.5 L225,15.5 M225,9.5 L219,15.5" stroke="#c2c2c2" stroke-width="1.8"/>
<circle cx="245" cy="12.5" r="7.3" fill="#eef5ff" stroke="#5a9ae6" stroke-width="1"/>
<path d="M241,12 C241,9 243,7.8 245.5,7.8 L247,7.8 M249,13 C249,16 247,17.2 244.5,17.2 L243,17.2" fill="none" stroke="#2e9a2e" stroke-width="1.8"/>
<path d="M246,5.5 L249,8 L246,10.5 Z M244,14.5 L241,17 L244,19.5 Z" fill="#2e9a2e"/>
<rect x="260" y="5" width="1" height="18" fill="#cfcfcf"/>
<rect x="266" y="9.5" width="16" height="8.5" rx="2" fill="#7a7a7a"/>
<rect x="268" y="12" width="12" height="2" fill="#9a9a9a"/>
<rect x="270" y="5" width="8" height="5.5" fill="#fff" stroke="#a0a0a0" stroke-width="0.8"/>
<rect x="269.5" y="15" width="9" height="5.8" fill="#fff" stroke="#a0a0a0" stroke-width="0.8"/>
<rect x="273" y="16.5" width="2" height="1.5" fill="#3a7ad0"/>
<rect x="275" y="10.5" width="3" height="1" fill="#4a9ae0"/>
<rect x="289.5" y="5" width="15" height="15" rx="1.5" fill="#3d8f3d" stroke="#2a5a2a" stroke-width="0.6"/>
<rect x="291.5" y="6.5" width="10.5" height="12.5" fill="#fbfcff" stroke="#333" stroke-width="0.6"/>
<path d="M293.5,9.5h6.5M293.5,11.7h6.5M293.5,13.9h6.5M293.5,16.1h6.5" stroke="#5a7fc8" stroke-width="0.7"/>
<path d="M311,7.5 L315.5,6 L315.5,18 L311,19.5 Z" fill="#dfe8f5" stroke="#3a4f75" stroke-width="0.9"/>
<path d="M315.5,8 L326.5,8 L326.5,19 L315.5,19" fill="#dfe8f5" stroke="#3a4f75" stroke-width="0.9"/>
<rect x="335" y="6" width="12" height="12" fill="#5060c8"/>
<rect x="337.5" y="6" width="7" height="5" fill="#dfe3f5"/>
<rect x="338" y="13.5" width="6" height="4.5" fill="#2a2a60"/>
<path d="M343,15 L347,19 L349.5,16.5 L349.5,20.5 L345.5,20.5" fill="#2ea84a"/>
<path d="M350,13 L355,13 L352.5,16 Z" fill="#222"/>
<rect x="366" y="5" width="1" height="18" fill="#cfcfcf"/>
</svg>
<div class="a" style="left:400px;top:242px;width:40px;height:26px;border:1px solid #a8a8a8;background:#fff"></div>
<div class="a" style="left:405px;top:248px;font-size:13px;line-height:15px;color:#000">1</div>
<div class="a" style="left:446px;top:248px;font-size:13px;line-height:15px;color:#000;white-space:nowrap">of</div><div class="a" style="left:467px;top:248px;font-size:13px;line-height:15px;color:#000">2</div><div class="a" style="left:477px;top:248px;font-size:13px;line-height:15px;color:#000">?</div>
<div class="a" style="left:729px;top:243px;width:98px;height:25px;background:#fff"></div>
<div class="a" style="left:827px;top:243px;width:11px;height:25px;background:#efefef"></div>
<svg class="a" style="left:828px;top:253px" width="8" height="6"><path d="M0.3,0.5 L6.3,0.5 L3.3,4 Z" fill="#111"/></svg>
<div class="a" style="left:733px;top:248px;font-size:13px;line-height:15px;color:#000">100%</div>
<div class="a" style="left:850px;top:242px;width:75px;height:26px;border:1px solid #a8a8a8;background:#fff"></div>
<div class="a" style="left:935px;top:248px;font-size:13px;line-height:15px;color:#777;white-space:nowrap">Find</div>
<div class="a" style="left:972px;top:249px;width:1px;height:11px;background:#c8c8c8"></div>
<div class="a" style="left:983px;top:248px;font-size:13px;line-height:15px;color:#777;white-space:nowrap">Next</div>
<div class="a" style="left:353px;top:270px;width:1519px;height:579px;overflow:hidden;background:#f5f5f5">
<table id="th" class="a" style="left:1px;top:0;width:1642px"><colgroup><col style="width:127px"><col style="width:178px"><col style="width:192px"><col style="width:138px"><col style="width:96px"><col style="width:126px"><col style="width:113px"><col style="width:168px"><col style="width:138px"><col style="width:160px"><col style="width:206px"></colgroup><tr>
<td>Membership ID</td>
<td class="s">First Name<span class="srt" style="left:157px"><svg width="8" height="13" viewBox="0 0 8 13"><path d="M4,0.8 L7.3,5 L0.7,5 Z M0.7,7.5 L7.3,7.5 L4,11.8 Z" fill="#000" stroke="#e8e8e8" stroke-width="1"/></svg></span></td>
<td>Last Name</td>
<td class="s">1-30<span class="srt" style="left:116px"><svg width="8" height="13" viewBox="0 0 8 13"><path d="M4,0.8 L7.3,5 L0.7,5 Z M0.7,7.5 L7.3,7.5 L4,11.8 Z" fill="#000" stroke="#e8e8e8" stroke-width="1"/></svg></span></td>
<td class="s">31-60<span class="srt" style="left:75px"><svg width="8" height="13" viewBox="0 0 8 13"><path d="M4,0.8 L7.3,5 L0.7,5 Z M0.7,7.5 L7.3,7.5 L4,11.8 Z" fill="#000" stroke="#e8e8e8" stroke-width="1"/></svg></span></td>
<td class="s">61-90<span class="srt" style="left:105px"><svg width="8" height="13" viewBox="0 0 8 13"><path d="M4,0.8 L7.3,5 L0.7,5 Z M0.7,7.5 L7.3,7.5 L4,11.8 Z" fill="#000" stroke="#e8e8e8" stroke-width="1"/></svg></span></td>
<td class="s">91-120<span class="srt" style="left:92px"><svg width="8" height="13" viewBox="0 0 8 13"><path d="M4,0.8 L7.3,5 L0.7,5 Z M0.7,7.5 L7.3,7.5 L4,11.8 Z" fill="#000" stroke="#e8e8e8" stroke-width="1"/></svg></span></td>
<td class="s">Greater than 120<span class="srt" style="left:147px"><svg width="8" height="13" viewBox="0 0 8 13"><path d="M4,0.8 L7.3,5 L0.7,5 Z M0.7,7.5 L7.3,7.5 L4,11.8 Z" fill="#000" stroke="#e8e8e8" stroke-width="1"/></svg></span></td>
<td>YTD Charges</td>
<td>YTD Payment</td>
<td>Last 12 Months Charges</td>
</tr></table>
<table id="tb" class="a" style="left:1px;top:31px;width:1642px"><colgroup><col style="width:127px"><col style="width:178px"><col style="width:192px"><col style="width:138px"><col style="width:96px"><col style="width:126px"><col style="width:113px"><col style="width:168px"><col style="width:138px"><col style="width:160px"><col style="width:206px"></colgroup>
<tr><td>12345</td><td>John</td><td>Pearsall</td><td class="m"><span>$0.00</span></td><td class="m"><span>$0.00</span></td><td class="m"><span>$0.00</span></td><td class="m"><span>0.00</span></td><td class="m"><span>$87.82</span></td><td class="m"><span>$0.00</span></td><td class="m"><span>$0.00</span></td><td class="m"><span></span></td></tr>
<tr><td>01</td><td>Jason</td><td>Pearsall</td><td class="m"><span>$0.00</span></td><td class="m"><span>$0.00</span></td><td class="m"><span>$0.00</span></td><td class="m"><span>0.00</span></td><td class="m"><span>$8,613.53</span></td><td class="m"><span>$147.31</span></td><td class="m"><span>$0.00</span></td><td class="m"><span>$8,760.84</span></td></tr>
<tr><td>0123</td><td>Jason</td><td>Pearsall</td><td class="m"><span>-$75.74</span></td><td class="m"><span>$0.00</span></td><td class="m"><span>$0.00</span></td><td class="m"><span>0.00</span></td><td class="m"><span>$0.00</span></td><td class="m"><span>$0.00</span></td><td class="m"><span>$0.00</span></td><td class="m"><span></span></td></tr>
<tr><td>1023</td><td>Angelo</td><td>Arca</td><td class="m"><span>$0.00</span></td><td class="m"><span>$0.00</span></td><td class="m"><span>$0.00</span></td><td class="m"><span>0.00</span></td><td class="m"><span>$3,261.28</span></td><td class="m"><span>$0.00</span></td><td class="m"><span>$0.00</span></td><td class="m"><span>$3,261.28</span></td></tr>
<tr><td>398</td><td>Brad</td><td>Tankersley</td><td class="m"><span>-$995.00</span></td><td class="m"><span>$0.00</span></td><td class="m"><span>$0.00</span></td><td class="m"><span>0.00</span></td><td class="m"><span>$0.00</span></td><td class="m"><span>$0.00</span></td><td class="m"><span>$0.00</span></td><td class="m"><span></span></td></tr>
<tr><td>123</td><td>Larry</td><td>Skrelli</td><td class="m"><span>$0.00</span></td><td class="m"><span>$0.00</span></td><td class="m"><span>$0.00</span></td><td class="m"><span>0.00</span></td><td class="m"><span>$5.00</span></td><td class="m"><span>$0.00</span></td><td class="m"><span>$0.00</span></td><td class="m"><span></span></td></tr>
<tr><td>399</td><td>Rory</td><td>Mattar</td><td class="m"><span>-$1,435.00</span></td><td class="m"><span>$0.00</span></td><td class="m"><span>$0.00</span></td><td class="m"><span>0.00</span></td><td class="m"><span>$0.00</span></td><td class="m"><span>$0.00</span></td><td class="m"><span>$0.00</span></td><td class="m"><span></span></td></tr>
<tr><td>12</td><td>ron</td><td>rozell</td><td class="m"><span>$0.00</span></td><td class="m"><span>$0.00</span></td><td class="m"><span>$0.00</span></td><td class="m"><span>0.00</span></td><td class="m"><span>$10.00</span></td><td class="m"><span>$0.00</span></td><td class="m"><span>$0.00</span></td><td class="m"><span></span></td></tr>
<tr><td>1235</td><td>candice</td><td>schomisch</td><td class="m"><span>$0.00</span></td><td class="m"><span>$0.00</span></td><td class="m"><span>$0.00</span></td><td class="m"><span>0.00</span></td><td class="m"><span>$5.00</span></td><td class="m"><span>$0.00</span></td><td class="m"><span>$0.00</span></td><td class="m"><span></span></td></tr>
<tr><td>12345698</td><td>Sandy</td><td>Jackson</td><td class="m"><span>$0.00</span></td><td class="m"><span>$0.00</span></td><td class="m"><span>$0.00</span></td><td class="m"><span>0.00</span></td><td class="m"><span>$5.00</span></td><td class="m"><span>$0.00</span></td><td class="m"><span>$0.00</span></td><td class="m"><span></span></td></tr>
<tr><td>5252</td><td>Sandy</td><td>Seibt</td><td class="m"><span>$0.00</span></td><td class="m"><span>$0.00</span></td><td class="m"><span>$0.00</span></td><td class="m"><span>0.00</span></td><td class="m"><span>$5.00</span></td><td class="m"><span>$0.00</span></td><td class="m"><span>$0.00</span></td><td class="m"><span></span></td></tr>
<tr><td>582</td><td>Regency</td><td>Home Care</td><td class="m"><span>$0.00</span></td><td class="m"><span>$0.00</span></td><td class="m"><span>$0.00</span></td><td class="m"><span>0.00</span></td><td class="m"><span>$634.97</span></td><td class="m"><span>$0.00</span></td><td class="m"><span>$0.00</span></td><td class="m"><span></span></td></tr>
<tr><td>400</td><td>Janey</td><td>Dillard</td><td class="m"><span>$0.00</span></td><td class="m"><span>$0.00</span></td><td class="m"><span>$0.00</span></td><td class="m"><span>0.00</span></td><td class="m"><span>$105.00</span></td><td class="m"><span>$0.00</span></td><td class="m"><span>$0.00</span></td><td class="m"><span></span></td></tr>
<tr><td>401</td><td>Glen</td><td>Smithwick</td><td class="m"><span>-$295.00</span></td><td class="m"><span>$0.00</span></td><td class="m"><span>$0.00</span></td><td class="m"><span>0.00</span></td><td class="m"><span>$0.00</span></td><td class="m"><span>$0.00</span></td><td class="m"><span>$0.00</span></td><td class="m"><span></span></td></tr>
<tr><td>403</td><td>bryce</td><td>hamilton</td><td class="m"><span>$0.00</span></td><td class="m"><span>$0.00</span></td><td class="m"><span>$0.00</span></td><td class="m"><span>0.00</span></td><td class="m"><span>$5.00</span></td><td class="m"><span>$0.00</span></td><td class="m"><span>$0.00</span></td><td class="m"><span></span></td></tr>
<tr><td>405</td><td>Ryan</td><td>Gerhardt</td><td class="m"><span>$0.00</span></td><td class="m"><span>$0.00</span></td><td class="m"><span>$0.00</span></td><td class="m"><span>0.00</span></td><td class="m"><span>$38.45</span></td><td class="m"><span>$0.00</span></td><td class="m"><span>$0.00</span></td><td class="m"><span></span></td></tr>
<tr><td>147</td><td>JONES</td><td>AMANDA</td><td class="m"><span>$0.00</span></td><td class="m"><span>$0.00</span></td><td class="m"><span>$0.00</span></td><td class="m"><span>0.00</span></td><td class="m"><span>$5.00</span></td><td class="m"><span>$0.00</span></td><td class="m"><span>$0.00</span></td><td class="m"><span></span></td></tr>
<tr><td>148</td><td>Kyle</td><td>Smith</td><td class="m"><span>$0.00</span></td><td class="m"><span>$0.00</span></td><td class="m"><span>$0.00</span></td><td class="m"><span>0.00</span></td><td class="m"><span>$5.00</span></td><td class="m"><span>$0.00</span></td><td class="m"><span>$0.00</span></td><td class="m"><span></span></td></tr>
</table></div>
<div class="a" style="left:1880px;top:286px;width:2px;height:300px;background:#7a7a7a"></div>
<div class="a" style="left:370px;top:857px;width:775px;height:2px;background:#7a7a7a"></div>
<svg class="a" style="left:0;top:0" width="1916" height="926" viewBox="0 0 1916 926">
<defs><filter id="sh" x="-50%" y="-50%" width="200%" height="200%"><feGaussianBlur in="SourceAlpha" stdDeviation="1.5"/><feOffset dx="1" dy="2"/><feComponentTransfer><feFuncA type="linear" slope="0.45"/></feComponentTransfer><feMerge><feMergeNode/><feMergeNode in="SourceGraphic"/></feMerge></filter></defs>
<g filter="url(#sh)" fill="#fd4043" stroke="#fd4043">
<path d="M1706.6,165.3 L1734,137.5" stroke-width="6.5" stroke-linecap="round" fill="none"/>
<path d="M1750,118 L1725.2,127.3 L1742.6,143.5 Z" stroke-width="1"/>
<path d="M263,524.2 L220,561" stroke-width="6.5" stroke-linecap="round" fill="none"/>
<path d="M203,577.8 L213.3,553.6 L228.4,570.4 Z" stroke-width="1"/>
</g></svg>
</body></html>
